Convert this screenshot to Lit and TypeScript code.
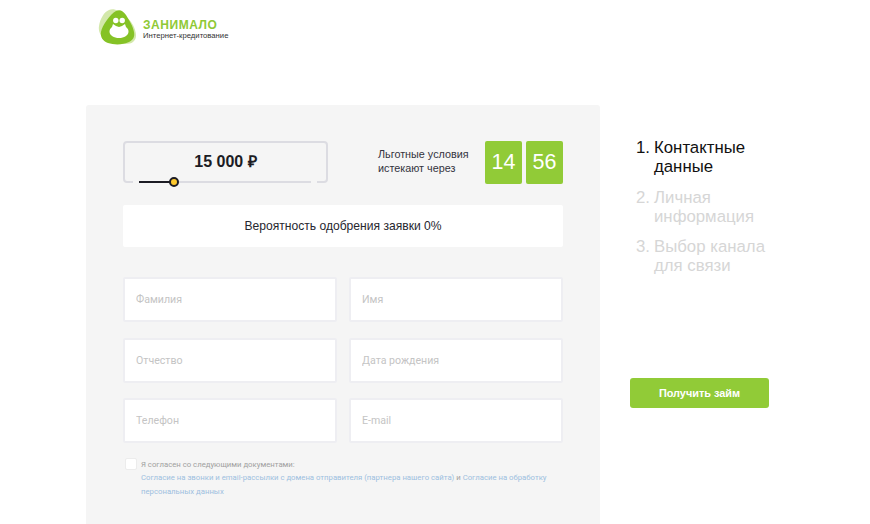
import { LitElement, html, css } from "lit";
import { customElement } from "lit/decorators.js";

const STEPS = [
  { n: 1, lines: ["Контактные", "данные"], active: true },
  { n: 2, lines: ["Личная", "информация"], active: false },
  { n: 3, lines: ["Выбор канала", "для связи"], active: false },
];

const FIELDS = ["Фамилия", "Имя", "Отчество", "Дата рождения", "Телефон", "E-mail"];

@customElement("app-root")
export class AppRoot extends LitElement {
  static styles = css`
    :host {
      display: block;
      height: 524px;
      overflow: hidden;
      background: #fff;
      font-family: "Liberation Sans", Arial, sans-serif;
      color: #222;
    }
    .logo {
      display: flex;
      align-items: flex-start;
      height: 105px;
      box-sizing: border-box;
      padding: 6px 0 0 98px;
    }
    .logo svg {
      display: block;
    }
    .brand {
      margin: 13px 0 0 6px;
    }
    .brand b {
      display: block;
      font-size: 12px;
      line-height: 12px;
      letter-spacing: 0.55px;
      color: #8fc936;
    }
    .brand span {
      display: block;
      font-size: 7.7px;
      line-height: 9px;
      color: #333;
    }
    .main {
      display: flex;
      align-items: flex-start;
      padding-left: 86px;
    }
    .panel {
      width: 514px;
      height: 440px;
      box-sizing: border-box;
      padding: 36px 37px 0;
      background: #f5f5f5;
      border-radius: 3px;
    }
    .top {
      display: flex;
      align-items: flex-start;
    }
    .amount {
      position: relative;
      width: 205px;
      height: 42px;
      box-sizing: border-box;
      border: 2px solid #dcdce2;
      border-radius: 4px;
      text-align: center;
      font-size: 16px;
      font-weight: bold;
      line-height: 37px;
      color: #1c1c24;
    }
    .track {
      position: absolute;
      left: 8px;
      right: 9px;
      bottom: -2px;
      height: 2px;
      padding: 0 6px;
      background: #f5f5f5;
    }
    .track i {
      display: block;
      height: 2px;
      background: #dcdce2;
    }
    .track u {
      position: absolute;
      left: 6px;
      top: 0;
      width: 32px;
      height: 2px;
      background: #1c1c24;
    }
    .track em {
      position: absolute;
      left: 36px;
      top: -4px;
      width: 6px;
      height: 6px;
      border: 2px solid #1c1c24;
      border-radius: 50%;
      background: #fdc92f;
    }
    .promo {
      margin: 7px 0 0 50px;
      width: 107px;
      font-size: 10.8px;
      line-height: 13.5px;
      color: #33333d;
    }
    .timer {
      width: 37px;
      height: 43px;
      margin-left: 4px;
      border-radius: 2px;
      background: #91cb37;
      color: #fff;
      font-size: 21.5px;
      line-height: 43px;
      text-align: center;
    }
    .timer.first {
      margin-left: 0;
    }
    .chance {
      height: 42px;
      margin-top: 21px;
      border-radius: 2px;
      background: #fff;
      text-align: center;
      font-size: 12.1px;
      line-height: 42px;
      color: #26262e;
    }
    .fields {
      display: grid;
      grid-template-columns: 214px 214px;
      grid-auto-rows: 45px;
      column-gap: 12px;
      row-gap: 15.5px;
      margin-top: 30px;
    }
    input {
      width: 100%;
      height: 100%;
      box-sizing: border-box;
      padding: 0 11px;
      border: 2px solid #eeeef2;
      border-radius: 2px;
      background: #fff;
      outline: none;
      font-family: Roboto, sans-serif;
      font-size: 10.6px;
    }
    input::placeholder {
      color: #c4c4c4;
      opacity: 1;
    }
    .agree {
      display: flex;
      margin-top: 15px;
      font-family: Roboto, sans-serif;
      font-size: 7.75px;
      line-height: 13.3px;
      color: #a0a0a0;
    }
    .box {
      flex: none;
      width: 12px;
      height: 12px;
      margin: 0 4px 0 2px;
      box-sizing: border-box;
      border: 1px solid #ececec;
      border-radius: 2px;
      background: #fff;
    }
    .agree a {
      color: #9dbfe0;
    }
    .side {
      width: 139px;
      margin: 33px 0 0 30px;
    }
    .step {
      display: flex;
      margin: 0 0 11.5px 6px;
      font-size: 16.8px;
      line-height: 19px;
      color: #d6d6d6;
    }
    .step.active {
      color: #111;
    }
    .step span {
      width: 18px;
      flex: none;
    }
    button {
      display: block;
      width: 139px;
      height: 30px;
      margin-top: 102.5px;
      padding: 0;
      border: none;
      border-radius: 3px;
      background: #91cb37;
      color: #fff;
      font-family: "Liberation Sans", Arial, sans-serif;
      font-size: 10.9px;
      font-weight: bold;
    }
  `;

  renderLogo() {
    return html`
      <svg width="39" height="40" viewBox="0 0 39 40">
        <path
          fill="#d3e8ab"
          d="M11 4C6 6 2 13 1 20c-1 6 2 11 8 14 8 3 21 6 26 2 5-4 3-11 0-17C32 13 19 0 11 4z"
        />
        <path
          fill="#85c226"
          d="M18 5c4-2 7 0 10 4 3 5 7 11 8 17 1 5-1 8-5 10-6 3-15 3-21 1-5-2-8-6-7-11 1-6 9-18 15-21z"
        />
        <circle cx="17.800" cy="14.500" r="2.700" fill="#fff" />
        <circle cx="24.200" cy="14.500" r="2.700" fill="#fff" />
        <path
          fill="#fff"
          d="M15 18c2 1.500 4 2.500 6 3 2-.5 4-1.500 6-3l1 3c2 1.500 2.500 3 2.500 4.500C30.500 29.500 26 32 21 32s-9.500-2.500-9.500-6.500c0-1.500.5-3 2.500-4.500z"
        />
      </svg>
    `;
  }

  render() {
    return html`
      <div class="logo">
        ${this.renderLogo()}
        <div class="brand">
          <b>ЗАНИМАЛО</b>
          <span>Интернет-кредитование</span>
        </div>
      </div>
      <div class="main">
        <div class="panel">
          <div class="top">
            <div class="amount">
              15 000 ₽
              <div class="track"><i></i><u></u><em></em></div>
            </div>
            <div class="promo">Льготные условия истекают через</div>
            <div class="timer first">14</div>
            <div class="timer">56</div>
          </div>
          <div class="chance">Вероятность одобрения заявки 0%</div>
          <div class="fields">
            ${FIELDS.map(f => html`<input type="text" placeholder=${f} />`)}
          </div>
          <div class="agree">
            <div class="box"></div>
            <div>
              Я согласен со следующими документами:<br />
              <a>Согласие на звонки и email-рассылки с домена отправителя (партнера нашего сайта)</a>
              и
              <a>Согласие на обработку</a><br />
              <a>персональных данных</a>
            </div>
          </div>
        </div>
        <div class="side">
          ${STEPS.map(
            s => html`
              <div class="step ${s.active ? "active" : ""}">
                <span>${s.n}.</span>
                <div>${s.lines[0]}<br />${s.lines[1]}</div>
              </div>
            `
          )}
          <button>Получить займ</button>
        </div>
      </div>
    `;
  }
}
